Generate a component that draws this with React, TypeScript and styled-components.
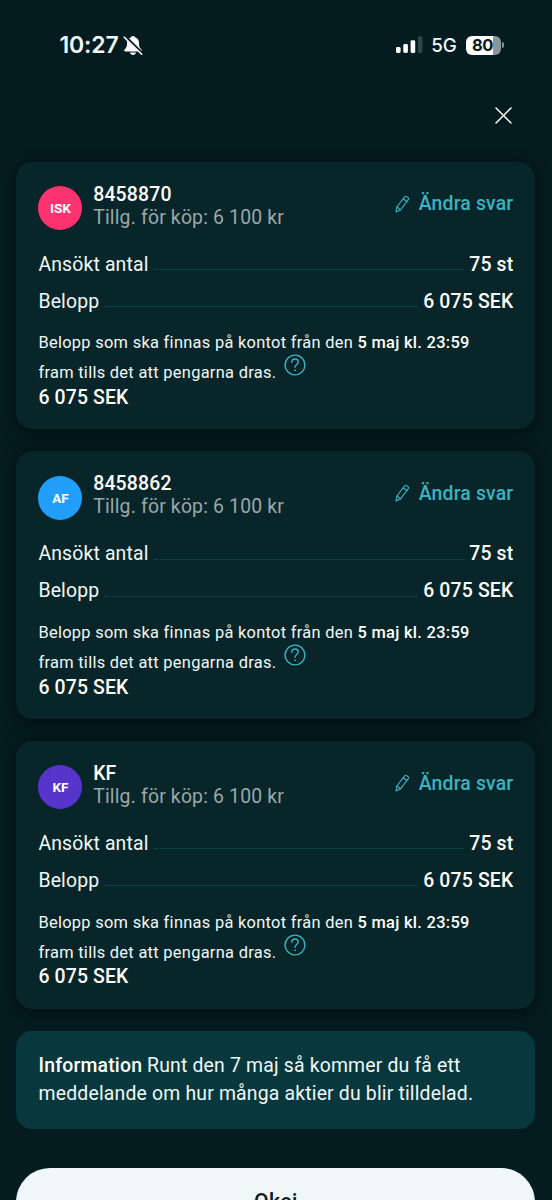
import React from 'react';
import styled, { createGlobalStyle } from 'styled-components';

const GlobalStyle = createGlobalStyle`
  * { box-sizing: border-box; }
  html { background: #041c20; }
  body {
    margin: 0;
    height: 1200px;
    overflow: hidden;
    background: #041c20;
    font-family: Roboto, sans-serif;
    color: #f0f9fa;
  }
`;

const Screen = styled.main`
  width: 552px;
  height: 1200px;
  overflow: hidden;
  display: flex;
  flex-direction: column;
`;

const StatusBar = styled.header`
  display: flex;
  align-items: center;
  justify-content: space-between;
  height: 90px;
  flex: none;
  padding: 0 48.5px 0 59.5px;
  font-family: Inter, sans-serif;
`;

const StatusGroup = styled.div`
  display: flex;
  align-items: center;
`;

const Clock = styled.span`
  font-size: 23px;
  font-weight: 600;
  letter-spacing: -0.15px;
  line-height: 28px;
  margin-right: 4.5px;
`;

const Network = styled.span`
  font-size: 18.8px;
  font-weight: 500;
  line-height: 24px;
  margin: 1px 9px 0 8.5px;
  letter-spacing: -0.2px;
`;

const Battery = styled.div`
  width: 35px;
  height: 19px;
  border-radius: 6px;
  background: linear-gradient(to right, #fff 27.5px, #87979a 27.5px);
  color: #041c20;
  font-size: 16.5px;
  font-weight: 700;
  line-height: 19px;
  letter-spacing: -0.4px;
  padding-left: 6.5px;
`;

const BatteryCap = styled.span`
  width: 2px;
  height: 6px;
  margin-left: 1px;
  border-radius: 0 2px 2px 0;
  background: #87979a;
`;

const TopBar = styled.nav`
  display: flex;
  justify-content: flex-end;
  align-items: center;
  flex: none;
  height: 51px;
  padding-right: 39.7px;
`;

const IconButton = styled.button`
  display: flex;
  padding: 0;
  border: 0;
  background: none;
  color: #fff;
`;

const CardList = styled.section`
  display: flex;
  flex-direction: column;
  gap: 22px;
  padding: 20.7px 16.7px 0 16.3px;
`;

const Card = styled.article`
  flex: none;
  height: 267.7px;
  padding: 20.9px 22px 0 22.1px;
  border-radius: 16px;
  background: #082529;
  box-shadow: 0 3px 14px 2px rgba(0, 8, 9, 0.55);
`;

const CardHeader = styled.div`
  display: flex;
  align-items: flex-start;
  height: 46px;
`;

const Avatar = styled.div<{ $color: string }>`
  display: flex;
  align-items: center;
  justify-content: center;
  width: 44px;
  height: 44px;
  margin: 3.4px 10.8px 0 0;
  border-radius: 50%;
  background: ${(p) => p.$color};
  color: #fff;
  font-size: 13.5px;
  font-weight: 700;
`;

const AccountText = styled.div`
  flex: 1;
  font-size: 19.4px;
  line-height: 23px;
  letter-spacing: 0.18px;
`;

const AccountName = styled.div`
  font-weight: 500;
  color: #fff;
`;

const Available = styled.div`
  color: #9ba8a9;
`;

const EditButton = styled.button`
  display: flex;
  align-items: center;
  gap: 9px;
  margin-top: 9.6px;
  padding: 0;
  border: 0;
  background: none;
  color: #3bb3c0;
  font: 500 19.4px/23px Roboto, sans-serif;
  letter-spacing: 0.16px;
`;

const Rows = styled.div`
  display: flex;
  flex-direction: column;
  gap: 14px;
  margin-top: 24px;
`;

const Row = styled.div`
  display: flex;
  align-items: flex-start;
  height: 23px;
  font-size: 19.4px;
  line-height: 23px;
  letter-spacing: 0.16px;
`;

const Leader = styled.span`
  flex: 1;
  height: 17.5px;
  margin: 0 6px 0 5px;
  border-bottom: 1px dotted #19545a;
`;

const Strong = styled.strong`
  font-weight: 500;
  color: #fff;
`;

const Note = styled.div`
  margin-top: 18.7px;
  font-size: 16.4px;
  line-height: 24px;
  letter-spacing: 0.3px;
  white-space: nowrap;
`;

const NoteLine = styled.div`
  display: flex;
  align-items: flex-end;
  gap: 7.5px;
  height: 30px;
`;

const Help = styled.svg`
  align-self: flex-start;
  flex: none;
  margin-top: -1px;
  color: #3bb3c0;
`;

const Total = styled.div`
  margin-top: 0.6px;
  font-size: 19.4px;
  font-weight: 500;
  line-height: 23px;
  letter-spacing: 0.16px;
  color: #fff;
`;

const Info = styled.section`
  flex: none;
  height: 98.5px;
  margin: 22px 16.7px 0 16.3px;
  padding: 21.3px 22px 0 22.3px;
  border-radius: 16px;
  background: #08383d;
  font-size: 19.4px;
  line-height: 27.5px;
  letter-spacing: 0.18px;
  white-space: nowrap;
`;

const Confirm = styled.button`
  flex: none;
  height: 68px;
  margin: 38.3px 16.7px 0 16.3px;
  padding: 0;
  border: 0;
  border-radius: 34px;
  background: #f0f7f9;
  color: #101a1c;
  font: 500 21.3px/61px Roboto, sans-serif;
  letter-spacing: 0.3px;
`;

const BellOff = () => (
  <svg width="20" height="21" viewBox="0 0 20 21">
    <path
      d="M10 1c-1.4 0-2.1.8-2.3 1.5C5.2 3.3 4 5.3 4 8c0 4-1 5-2.4 6.5-.8.9-.4 1.9.8 1.9h15.2c1.2 0 1.6-1 .8-1.9C17 13 16 12 16 8c0-2.7-1.2-4.7-3.7-5.5C12.1 1.8 11.4 1 10 1z"
      fill="#fff"
    />
    <path d="M7 17.6h6c-.3 1.5-1.500 2.300-3 2.300s-2.700-.8-3-2.300z" fill="#fff" />
    <path d="M2.200 1.600 19 18.400" stroke="#041c20" strokeWidth="3" />
    <path d="M1.200 2.200 18.700 19.200" stroke="#fff" strokeWidth="1.600" strokeLinecap="round" />
  </svg>
);

const Signal = () => (
  <svg width="27" height="18" viewBox="0 0 27 18" fill="#fff">
    <rect x="0" y="11" width="4.6" height="6" rx="1.4" />
    <rect x="7.3" y="8" width="4.6" height="9" rx="1.4" />
    <rect x="14.6" y="4.2" width="4.6" height="12.8" rx="1.4" />
    <rect x="21.9" y="0.2" width="4.6" height="16.8" rx="1.4" fill="#2f4649" />
  </svg>
);

const Pencil = () => (
  <svg
    width="15"
    height="18"
    viewBox="0 0 15 18"
    fill="none"
    stroke="currentColor"
    strokeWidth="1.1"
    strokeLinejoin="round"
    strokeLinecap="round"
  >
    <path d="M1 16.9 1.9 12 9.6 1.900q.9-1.100 2-.3l1.500 1.100q1 .9.200 2L5.500 14.800z" />
    <path d="M8.200 3.800 11.700 6.500M1.900 12l3.600 2.800" />
  </svg>
);

const Question = () => (
  <Help
    width="22"
    height="22"
    viewBox="0 0 22 22"
    fill="none"
    stroke="currentColor"
    strokeWidth="1.4"
    strokeLinecap="round"
  >
    <circle cx="11" cy="11" r="9.9" />
    <path d="M7.800 8.200c0-2 1.400-3.200 3.200-3.200s3.200 1.200 3.200 2.900c0 2.400-3.200 2.700-3.200 5.300" />
    <circle cx="11" cy="16.3" r="0.5" fill="currentColor" strokeWidth="0.9" />
  </Help>
);

type Account = { badge: string; color: string; name: string };

const accounts: Account[] = [
  { badge: 'ISK', color: '#ff3370', name: '8458870' },
  { badge: 'AF', color: '#229ffc', name: '8458862' },
  { badge: 'KF', color: '#5734cb', name: 'KF' },
];

const AccountCard = ({ badge, color, name }: Account) => (
  <Card>
    <CardHeader>
      <Avatar $color={color}>{badge}</Avatar>
      <AccountText>
        <AccountName>{name}</AccountName>
        <Available>Tillg. för köp: 6 100 kr</Available>
      </AccountText>
      <EditButton>
        <Pencil />
        Ändra svar
      </EditButton>
    </CardHeader>
    <Rows>
      <Row>
        Ansökt antal
        <Leader />
        <Strong>75 st</Strong>
      </Row>
      <Row>
        Belopp
        <Leader />
        <Strong>6 075 SEK</Strong>
      </Row>
    </Rows>
    <Note>
      <div>
        Belopp som ska finnas på kontot från den <Strong>5 maj kl. 23:59</Strong>
      </div>
      <NoteLine>
        fram tills det att pengarna dras.
        <Question />
      </NoteLine>
    </Note>
    <Total>6 075 SEK</Total>
  </Card>
);

export default function App() {
  return (
    <>
      <GlobalStyle />
      <Screen>
        <StatusBar>
          <StatusGroup>
            <Clock>10:27</Clock>
            <BellOff />
          </StatusGroup>
          <StatusGroup>
            <Signal />
            <Network>5G</Network>
            <Battery>80</Battery>
            <BatteryCap />
          </StatusGroup>
        </StatusBar>
        <TopBar>
          <IconButton aria-label="Stäng">
            <svg width="17" height="17" viewBox="0 0 17 17" stroke="currentColor" strokeWidth="1.5" strokeLinecap="round">
              <path d="M1 1 16 16M16 1 1 16" />
            </svg>
          </IconButton>
        </TopBar>
        <CardList>
          {accounts.map((a) => (
            <AccountCard key={a.badge} {...a} />
          ))}
        </CardList>
        <Info>
          <Strong>Information</Strong> Runt den 7 maj så kommer du få ett
          <br />
          meddelande om hur många aktier du blir tilldelad.
        </Info>
        <Confirm>Okej</Confirm>
      </Screen>
    </>
  );
}
